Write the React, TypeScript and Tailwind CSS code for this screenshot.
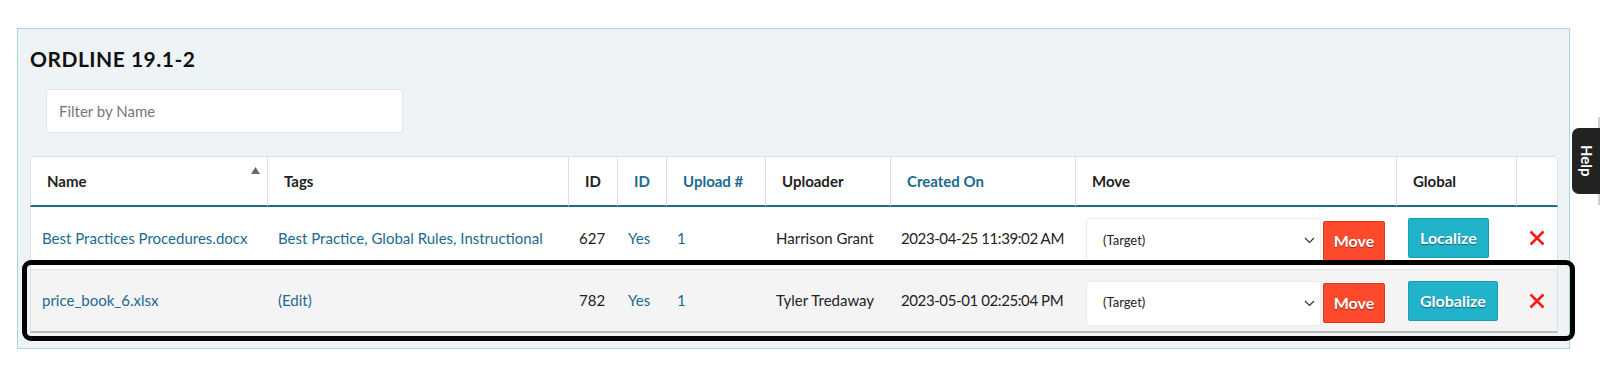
import React from "react";

interface FileRow {
  name: string;
  tags: string;
  id: number;
  global: string;
  upload: number;
  uploader: string;
  created: string;
  action: string;
}

const rows: FileRow[] = [
  {
    name: "Best Practices Procedures.docx",
    tags: "Best Practice, Global Rules, Instructional",
    id: 627,
    global: "Yes",
    upload: 1,
    uploader: "Harrison Grant",
    created: "2023-04-25 11:39:02 AM",
    action: "Localize",
  },
  {
    name: "price_book_6.xlsx",
    tags: "(Edit)",
    id: 782,
    global: "Yes",
    upload: 1,
    uploader: "Tyler Tredaway",
    created: "2023-05-01 02:25:04 PM",
    action: "Globalize",
  },
];

const Chevron = () => (
  <svg width="11" height="7" viewBox="0 0 11 7" fill="none">
    <path d="M1 1l4.5 4.5L10 1" stroke="#333" strokeWidth="1.2" />
  </svg>
);

const RedX = () => (
  <svg width="16" height="16" viewBox="0 0 16 16" fill="none">
    <path d="M1.5 1.5l13 13M14.5 1.5l-13 13" stroke="#ff1a1a" strokeWidth="2.6" />
  </svg>
);

const SortUp = () => (
  <svg width="9" height="7" viewBox="0 0 9 7">
    <path d="M4.5 0L9 7H0z" fill="#6a6a6a" />
  </svg>
);

export default function App() {
  return (
    <div
      className="relative w-full h-[386px] bg-white overflow-hidden pt-[28px] pl-[17px] pr-[30px] text-[#222]"
      style={{ fontFamily: "Lato, 'Noto Sans', sans-serif" }}
    >
      <div className="border border-[#a6d6df] bg-[#eef4f6] px-3 pt-[18px] pb-[15px]">
        <h1 className="text-[21px] leading-[24px] font-bold tracking-[0.5px] text-[#111]">ORDLINE 19.1-2</h1>

        <div className="mt-[18px] ml-4 w-[357px] h-[44px] bg-white border border-[#e1e6e8] rounded-[3px] flex items-center px-3">
          <span className="text-[15px] text-[#777]">Filter by Name</span>
        </div>

        <table className="mt-[23px] w-full table-fixed border-separate border-spacing-0 bg-white">
          <colgroup>
            <col className="w-[237px]" />
            <col className="w-[301px]" />
            <col className="w-[49px]" />
            <col className="w-[49px]" />
            <col className="w-[99px]" />
            <col className="w-[125px]" />
            <col className="w-[185px]" />
            <col className="w-[321px]" />
            <col className="w-[120px]" />
            <col className="w-[42px]" />
          </colgroup>
          <thead>
            <tr className="h-[51px] text-left text-[15px] font-bold">
              <th className="pl-4 border-t border-l border-b-2 border-[#dcdfe1] border-b-[#1d6b90] rounded-tl-[4px]">
                <div className="flex items-start justify-between pr-[7px]">
                  <span className="pt-[1px]">Name</span>
                  <span className="-mt-[2px]">
                    <SortUp />
                  </span>
                </div>
              </th>
              <th className="pl-4 border-t border-l border-b-2 border-[#dcdfe1] border-b-[#1d6b90]">Tags</th>
              <th className="pl-4 border-t border-l border-b-2 border-[#dcdfe1] border-b-[#1d6b90]">ID</th>
              <th className="pl-4 border-t border-l border-b-2 border-[#dcdfe1] border-b-[#1d6b90] text-[#1b6a8f]">ID</th>
              <th className="pl-4 border-t border-l border-b-2 border-[#dcdfe1] border-b-[#1d6b90] text-[#1b6a8f]">Upload #</th>
              <th className="pl-4 border-t border-l border-b-2 border-[#dcdfe1] border-b-[#1d6b90]">Uploader</th>
              <th className="pl-4 border-t border-l border-b-2 border-[#dcdfe1] border-b-[#1d6b90] text-[#1b6a8f]">Created On</th>
              <th className="pl-4 border-t border-l border-b-2 border-[#dcdfe1] border-b-[#1d6b90]">Move</th>
              <th className="pl-4 border-t border-l border-b-2 border-[#dcdfe1] border-b-[#1d6b90]">Global</th>
              <th className="border-t border-l border-r border-b-2 border-[#dcdfe1] border-b-[#1d6b90] rounded-tr-[4px]"></th>
            </tr>
          </thead>
          <tbody>
            {rows.map((r, i) => {
              const last = i === rows.length - 1;
              const edge = last ? "border-b-2 border-b-[#b9b9b9]" : "border-b border-b-[#e3e3e3]";
              return (
                <tr
                  key={r.id}
                  className={`h-[63px] text-[15px] ${last ? "bg-[#f4f4f4]" : "bg-white"}`}
                >
                  <td className={`px-[11px] border-l border-[#dcdfe1] whitespace-nowrap text-[#1b6a8f] ${edge}`}>
                    {r.name}
                  </td>
                  <td className={`px-[11px] whitespace-nowrap text-[#1b6a8f] ${edge}`}>{r.tags}</td>
                  <td className={`px-[11px] ${edge}`}>{r.id}</td>
                  <td className={`px-[11px] text-[#1b6a8f] ${edge}`}>{r.global}</td>
                  <td className={`px-[11px] text-[#1b6a8f] ${edge}`}>{r.upload}</td>
                  <td className={`px-[11px] whitespace-nowrap ${edge}`}>{r.uploader}</td>
                  <td className={`px-[11px] whitespace-nowrap tracking-[-0.4px] ${edge}`}>{r.created}</td>
                  <td className={`px-[11px] ${edge}`}>
                    <div className="flex items-center gap-[2px] pt-[5px]">
                      <div className="w-[235px] h-[45px] bg-white border border-[#ececec] rounded-[3px] flex items-center justify-between pl-4 pr-[5px]">
                        <span className="text-[13px] text-[#222]">(Target)</span>
                        <Chevron />
                      </div>
                      <button className="w-[62px] h-[40px] bg-[#fd4a2d] border border-[#d9391f] rounded-[2px] text-white font-bold text-[16px] [text-shadow:0_1px_1px_rgba(0,0,0,0.45)]">
                        Move
                      </button>
                    </div>
                  </td>
                  <td className={`px-3 ${edge}`}>
                    <button className="h-[40px] px-[11px] bg-[#20b3ca] border border-[#1a9db2] rounded-[2px] text-white font-bold text-[16px] [text-shadow:0_1px_1px_rgba(0,0,0,0.45)]">
                      {r.action}
                    </button>
                  </td>
                  <td className={`border-r border-[#dcdfe1] ${edge}`}>
                    <div className="flex justify-center">
                      <RedX />
                    </div>
                  </td>
                </tr>
              );
            })}
          </tbody>
        </table>
      </div>

      {/* highlight annotation around the second row */}
      <div className="absolute left-[22px] top-[260px] w-[1553px] h-[81px] border-[5px] border-black rounded-[9px] pointer-events-none" />

      {/* help tab */}
      <div className="absolute right-0 top-[117px] w-[2px] h-[88px] bg-[#cfcfcf]" />
      <div className="absolute right-0 top-[128px] w-[28px] h-[66px] bg-[#222] rounded-l-[7px] flex items-center justify-center">
        <span className="[writing-mode:vertical-rl] text-white font-bold text-[15px] leading-none">Help</span>
      </div>
    </div>
  );
}
